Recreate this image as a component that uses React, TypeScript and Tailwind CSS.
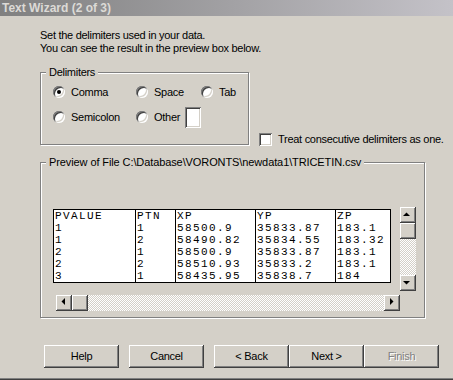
const raised =
  'bg-[#d4d0c8] shadow-[inset_-1px_-1px_0_#404040,inset_1px_1px_0_#ffffff,inset_-2px_-2px_0_#808080,inset_2px_2px_0_#d4d0c8]'
const sunken =
  'bg-white shadow-[inset_1px_1px_0_#808080,inset_-1px_-1px_0_#ffffff,inset_2px_2px_0_#404040,inset_-2px_-2px_0_#d4d0c8]'
const etched = 'border border-[#808080] shadow-[inset_1px_1px_0_#ffffff,1px_1px_0_#ffffff]'
const dither = 'bg-[image:repeating-conic-gradient(#ffffff_0_25%,#d4d0c8_0_50%)] bg-[length:2px_2px]'

type Dir = 'up' | 'down' | 'left' | 'right'

function Arrow({ dir }: { dir: Dir }) {
  const pts = {
    up: '3,9 10,9 6.5,5.5',
    down: '3,6 10,6 6.5,9.5',
    left: '9,3 9,10 5.5,6.5',
    right: '6,3 6,10 9.5,6.5',
  }
  return (
    <div className={`w-[16px] h-[16px] shrink-0 ${raised}`}>
      <svg width="16" height="16" viewBox="0 0 16 16">
        <polygon points={pts[dir]} fill="#000" />
      </svg>
    </div>
  )
}

function Radio({ label, checked, w }: { label: string; checked?: boolean; w?: string }) {
  return (
    <div className={`flex items-center gap-[6px] ${w ?? ''}`}>
      <div className={`w-[12px] h-[12px] rounded-full flex items-center justify-center ${sunken}`}>
        {checked && <div className="w-[4px] h-[4px] rounded-full bg-black" />}
      </div>
      <span>{label}</span>
    </div>
  )
}

function Button({ label, disabled, className }: { label: string; disabled?: boolean; className?: string }) {
  return (
    <div
      className={`w-[75px] h-[23px] flex items-center justify-center ${raised} ${
        disabled ? 'text-[#808080] [text-shadow:1px_1px_0_#ffffff]' : 'text-black'
      } ${className ?? ''}`}
    >
      {label}
    </div>
  )
}

const columns = [
  { name: 'PVALUE', w: 'w-[81px]' },
  { name: 'PTN', w: 'w-[40px]' },
  { name: 'XP', w: 'w-[80px]' },
  { name: 'YP', w: 'w-[80px]' },
  { name: 'ZP', w: 'flex-1' },
]

const rows = [
  ['1', '1', '58500.9', '35833.87', '183.1'],
  ['1', '2', '58490.82', '35834.55', '183.32'],
  ['2', '1', '58500.9', '35833.87', '183.1'],
  ['2', '2', '58510.93', '35833.2', '183.1'],
  ['3', '1', '58435.95', '35838.7', '184'],
]

export default function App() {
  return (
    <div className="w-[453px] h-[380px] overflow-hidden bg-[#d4d0c8] flex flex-col text-[11px] leading-[13px] tracking-[-0.28px] text-black font-['Liberation_Sans',Arial,sans-serif]">
      {/* Title bar */}
      <div className="h-[16px] shrink-0 flex items-center pl-[2px] bg-gradient-to-r from-[#808080] to-[#c4c2c8] text-[#dcdad6] text-[12px] font-bold tracking-normal">
        Text Wizard (2 of 3)
      </div>

      <div className="flex-1 flex flex-col pl-[40px]">
        <p className="mt-[13px]">
          Set the delimiters used in your data.
          <br />
          You can see the result in the preview box below.
        </p>

        <div className="mt-[17px] flex items-end">
          {/* Delimiters */}
          <div className={`relative w-[209px] h-[73px] pl-[12px] pt-[9px] flex flex-col gap-[5px] ${etched}`}>
            <span className="absolute left-[5px] top-[-7px] px-[3px] bg-[#d4d0c8]">Delimiters</span>
            <div className="h-[20px] flex items-center">
              <Radio label="Comma" checked w="w-[83px]" />
              <Radio label="Space" w="w-[65px]" />
              <Radio label="Tab" />
            </div>
            <div className="h-[20px] flex items-center">
              <Radio label="Semicolon" w="w-[83px]" />
              <Radio label="Other" />
              <div className={`ml-[5px] w-[16px] h-[21px] ${sunken}`} />
            </div>
          </div>

          <div className="ml-[10px] mb-[-1px] flex items-center gap-[6px] whitespace-nowrap">
            <div className={`w-[13px] h-[13px] ${sunken}`} />
            <span>Treat consecutive delimiters as one.</span>
          </div>
        </div>

        {/* Preview */}
        <div className={`relative mt-[17px] w-[385px] h-[156px] pt-[44px] pl-[12px] ${etched}`}>
          <span className="absolute left-[5px] top-[-7px] px-[3px] bg-[#d4d0c8] whitespace-nowrap tracking-[-0.1px]">
            Preview of File C:\Database\VORONTS\newdata1\TRICETIN.csv
          </span>

          <div className="flex items-start">
            <div className="mt-[2px] w-[338px] h-[74px] bg-white border border-black flex font-['Liberation_Mono','Courier_New',monospace] text-[11px] leading-[12px] tracking-[1.4px]">
              {columns.map((c, ci) => (
                <div key={c.name} className={`${c.w} ${ci > 0 ? 'border-l border-black' : ''} pl-[1px] flex flex-col`}>
                  <div>{c.name}</div>
                  {rows.map((r, ri) => (
                    <div key={ri}>{r[ci]}</div>
                  ))}
                </div>
              ))}
            </div>

            <div className="ml-[9px] w-[16px] h-[84px] flex flex-col">
              <Arrow dir="up" />
              <div className={`w-[16px] h-[16px] ${raised}`} />
              <div className={`flex-1 ${dither}`} />
              <Arrow dir="down" />
            </div>
          </div>

          <div className="mt-[4px] ml-[3px] w-[344px] h-[16px] flex">
            <Arrow dir="left" />
            <div className={`w-[16px] h-[16px] ${raised}`} />
            <div className={`flex-1 ${dither}`} />
            <Arrow dir="right" />
          </div>
        </div>

        {/* Buttons */}
        <div className="mt-[27px] ml-[4px] flex">
          <Button label="Help" />
          <Button label="Cancel" className="ml-[10px]" />
          <Button label="< Back" className="ml-[10px]" />
          <Button label="Next >" />
          <Button label="Finish" disabled />
        </div>
      </div>

      <div className="h-[1px] bg-[#808080] shrink-0" />
      <div className="h-[1px] bg-[#404040] shrink-0" />
    </div>
  )
}
